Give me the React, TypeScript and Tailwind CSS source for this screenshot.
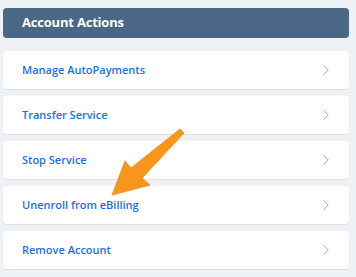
import { ChevronRight } from "lucide-react";

const actions = [
  "Manage AutoPayments",
  "Transfer Service",
  "Stop Service",
  "Unenroll from eBilling",
  "Remove Account",
];

const App = () => {
  return (
    <div
      className="relative w-[356px] h-[277px] bg-[#eef1f6] pt-[8px] pl-[3px] pr-[7px] overflow-hidden"
      style={{ fontFamily: '"Open Sans", "Noto Sans", sans-serif' }}
    >
      <div className="h-[30px] rounded-[4px] bg-[#4a6785] flex items-center pl-[19px]">
        <h2 className="text-white text-[13px] font-bold tracking-[-0.2px]">
          Account Actions
        </h2>
      </div>

      <ul className="mt-[13px] flex flex-col gap-[7px]">
        {actions.map((action) => (
          <li
            key={action}
            className="h-[38px] rounded-[4px] bg-white shadow-[0_1px_1px_rgba(0,0,0,0.08)] flex items-center justify-between pl-[19px] pr-[14px]"
          >
            <span className="text-[#1a6fe8] text-[11px] font-semibold">
              {action}
            </span>
            <ChevronRight className="w-[18px] h-[18px] text-[#8196b2]" strokeWidth={1.1} />
          </li>
        ))}
      </ul>

      <svg
        className="absolute left-0 top-0 pointer-events-none"
        width="356"
        height="277"
        viewBox="0 0 356 277"
      >
        <polygon
          points="112,195 125,161 131,168 180,129 184,133 142,178 150,185"
          fill="#f7951d"
          stroke="#f7951d"
          strokeWidth="1"
          strokeLinejoin="round"
        />
      </svg>
    </div>
  );
};

export default App;
